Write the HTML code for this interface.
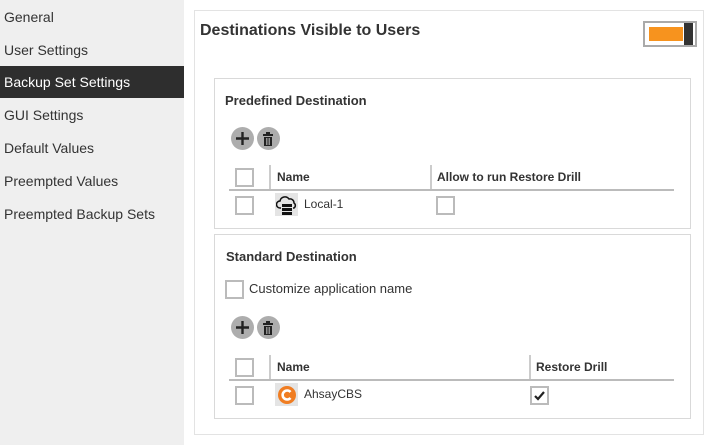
<!DOCTYPE html>
<html><head><style>
body{margin:0;width:720px;height:445px;background:#fff;font-family:"Liberation Sans",sans-serif;color:#333;position:relative;overflow:hidden}
.side{position:absolute;left:0;top:0;width:184px;height:445px;background:#efefef}
.side .t{position:absolute;left:4px;font-size:14px;line-height:16px}
.side .act{position:absolute;left:0;top:66px;width:184px;height:32px;background:#2e2e2e}
.a{position:absolute}
.box{position:absolute;border:1px solid #d9d9d9}
.cb{position:absolute;width:15px;height:15px;border:2px solid #bbb;background:#fff}
.b{font-weight:bold}
.circ{position:absolute;width:23px;height:23px;border-radius:50%;background:#adadad}
.sep{position:absolute;width:2px;height:24px;background:#ccc}
.line{position:absolute;height:2px;background:#bbb;left:229px;width:445px}
</style></head><body>
<div class="side">
<div class="act"></div>
<div class="t" style="top:9px">General</div>
<div class="t" style="top:42px">User Settings</div>
<div class="t" style="top:74px;color:#fff">Backup Set Settings</div>
<div class="t" style="top:107px">GUI Settings</div>
<div class="t" style="top:140px">Default Values</div>
<div class="t" style="top:173px">Preempted Values</div>
<div class="t" style="top:206px">Preempted Backup Sets</div>
</div>
<div class="box" style="left:194px;top:10px;width:508px;height:423px;border-color:#e3e3e3"></div>
<div class="a b" style="left:200px;top:22px;font-size:16px">Destinations Visible to Users</div>
<div class="a" style="left:643px;top:21px;width:50px;height:22px;border:2px solid #aaa;background:#fff"></div>
<div class="a" style="left:649px;top:27px;width:34px;height:14px;background:#f7931e"></div>
<div class="a" style="left:684px;top:23px;width:9px;height:22px;background:#333"></div>

<div class="box" style="left:214px;top:78px;width:475px;height:149px"></div>
<div class="a b" style="left:225px;top:93px;font-size:13px">Predefined Destination</div>
<div class="circ" style="left:231px;top:127px"></div><div class="circ" style="left:257px;top:127px"></div>
<svg class="a" style="left:231px;top:127px" width="50" height="23"><path d="M5 11.5h13M11.5 5v13" stroke="#222" stroke-width="2.4"/><g fill="#222"><rect x="32" y="7" width="10" height="2"/><rect x="35" y="5" width="4" height="2"/><rect x="33" y="10" width="8" height="9"/></g><g stroke="#adadad" stroke-width="0.8"><path d="M35.5 11v7M37 11v7M38.5 11v7"/></g></svg>
<div class="cb" style="left:235px;top:168px"></div>
<div class="sep" style="left:269px;top:165px"></div><div class="sep" style="left:430px;top:165px"></div>
<div class="a b" style="left:277px;top:170px;font-size:12px">Name</div>
<div class="a b" style="left:437px;top:170px;font-size:12px">Allow to run Restore Drill</div>
<div class="line" style="top:189px"></div>
<div class="cb" style="left:235px;top:196px"></div>
<div class="a" style="left:275px;top:193px;width:23px;height:23px;background:#e4e4e4"></div>
<svg class="a" style="left:276px;top:195px" width="22" height="20"><path d="M5 13h-1a3.5 3.5 0 0 1 0-7a5 5 0 0 1 9-2a4 4 0 0 1 5 4a3 3 0 0 1 0 5h-1" fill="none" stroke="#111" stroke-width="1.5"/><rect x="6" y="9" width="10" height="3" fill="#111"/><rect x="6" y="13" width="10" height="3" fill="#111"/><rect x="6" y="17" width="10" height="3" fill="#111"/></svg>
<div class="a" style="left:304px;top:197px;font-size:12px">Local-1</div>
<div class="cb" style="left:436px;top:196px"></div>

<div class="box" style="left:214px;top:234px;width:475px;height:183px"></div>
<div class="a b" style="left:226px;top:249px;font-size:13px">Standard Destination</div>
<div class="cb" style="left:225px;top:280px"></div>
<div class="a" style="left:249px;top:281px;font-size:13px">Customize application name</div>
<div class="circ" style="left:231px;top:316px"></div><div class="circ" style="left:257px;top:316px"></div>
<svg class="a" style="left:231px;top:316px" width="50" height="23"><path d="M5 11.5h13M11.5 5v13" stroke="#222" stroke-width="2.4"/><g fill="#222"><rect x="32" y="7" width="10" height="2"/><rect x="35" y="5" width="4" height="2"/><rect x="33" y="10" width="8" height="9"/></g><g stroke="#adadad" stroke-width="0.8"><path d="M35.5 11v7M37 11v7M38.5 11v7"/></g></svg>
<div class="cb" style="left:235px;top:358px"></div>
<div class="sep" style="left:269px;top:355px"></div><div class="sep" style="left:529px;top:355px"></div>
<div class="a b" style="left:277px;top:360px;font-size:12px">Name</div>
<div class="a b" style="left:536px;top:360px;font-size:12px">Restore Drill</div>
<div class="line" style="top:379px"></div>
<div class="cb" style="left:235px;top:386px"></div>
<div class="a" style="left:275px;top:383px;width:23px;height:23px;background:#e4e4e4"></div>
<svg class="a" style="left:277px;top:385px" width="20" height="20"><circle cx="10" cy="10" r="9" fill="#f07d22"/><path d="M13.5 7a4.5 4.5 0 1 0 0 6" fill="none" stroke="#fff" stroke-width="2.6"/></svg>
<div class="a" style="left:304px;top:387px;font-size:12px">AhsayCBS</div>
<div class="cb" style="left:530px;top:386px"></div>
<svg class="a" style="left:532px;top:388px" width="15" height="15"><path d="M3 8l3 3l6-7" fill="none" stroke="#222" stroke-width="2.2"/></svg>
</body></html>
